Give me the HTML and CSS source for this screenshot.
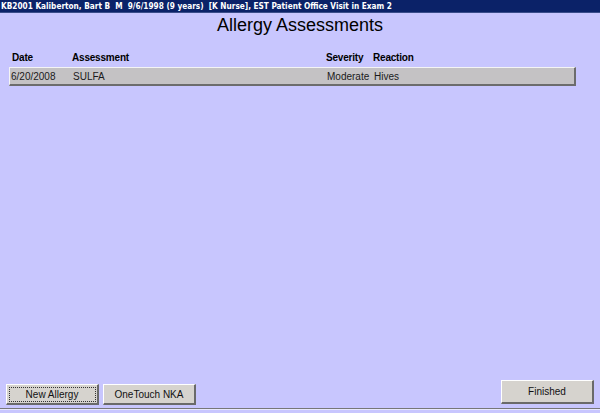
FILE: index.html
```html
<!DOCTYPE html>
<html>
<head>
<meta charset="utf-8">
<link rel="stylesheet" href="styles.css">
</head>
<body>
<div class="titlebar">KB2001 Kaliberton, Bart B&nbsp; M&nbsp; 9/6/1998 (9 years)&nbsp; [K Nurse], EST Patient Office Visit in Exam 2</div>
<main class="content">
  <h1 class="heading">Allergy Assessments</h1>
  <div class="grid">
    <div class="row head">
      <span class="c-date">Date</span>
      <span class="c-assess">Assessment</span>
      <span class="c-sev">Severity</span>
      <span class="c-react">Reaction</span>
    </div>
    <div class="row item">
      <span class="c-date">6/20/2008</span>
      <span class="c-assess">SULFA</span>
      <span class="c-sev">Moderate</span>
      <span class="c-react">Hives</span>
    </div>
  </div>
  <div class="spacer"></div>
  <div class="footer">
    <div class="left">
      <button class="btn focus">New Allergy</button>
      <button class="btn">OneTouch NKA</button>
    </div>
    <button class="btn tall">Finished</button>
  </div>
</main>
<div class="bottomline"></div>
</body>
</html>
```
FILE: styles.css
```css
html, body { margin: 0; padding: 0; }
body {
  width: 600px; height: 413px;
  background: #c8c6fe;
  font-family: "Liberation Sans", Arial, sans-serif;
  display: flex; flex-direction: column;
  overflow: hidden;
}
.titlebar {
  height: 12px;
  background: #0b2268;
  color: #fff;
  font-family: "DejaVu Sans Condensed", "DejaVu Sans", sans-serif;
  font-weight: bold;
  font-size: 8.2px;
  line-height: 12px;
  padding-left: 1px;
  white-space: nowrap;
  border-bottom: 1px solid #3a4d8a;
}
.content {
  flex: 1;
  display: flex; flex-direction: column;
}
.heading {
  margin: 1px 0 0;
  text-align: center;
  font-weight: normal;
  font-size: 18px;
  line-height: 22px;
  color: #000;
}
.grid { margin: 15px 0 0 9px; width: 567px; }
.row { display: flex; font-size: 10px; align-items: center; }
.row.head { font-weight: bold; height: 16px; color: #000; letter-spacing: -0.2px; align-items: flex-start; line-height: 13px; }
.row.item {
  height: 16px;
  background: #c4c2c4;
  border-top: 1px solid #f4f4f4;
  border-left: 1px solid #f4f4f4;
  border-right: 2px solid #6c6c6c;
  border-bottom: 2px solid #6c6c6c;
  color: #1a1a1a;
}
.row.head .c-date { padding-left: 3px; }
.row.item .c-date { padding-left: 1px; }
.c-date { width: 60px; }
.row.item .c-date { width: 62px; }
.c-assess { width: 254px; }
.c-sev { width: 47px; }
.c-react { flex: 1; }
.spacer { flex: 1; }
.footer {
  display: flex; justify-content: space-between; align-items: flex-end;
  padding: 0 6px 3px 6px;
}
.left { display: flex; gap: 4px; }
.btn {
  font-family: "Liberation Sans", Arial, sans-serif;
  font-size: 10px;
  color: #111;
  background: #d6d3ce;
  width: 93px; height: 21px;
  border: none;
  border-top: 1px solid #fff;
  border-left: 1px solid #fff;
  border-right: 2px solid #6a6a6a;
  border-bottom: 2px solid #6a6a6a;
  padding: 0;
  margin: 0;
}
.btn.focus { outline: 1px dotted #333; outline-offset: -4px; }
.btn.tall { height: 24px; margin-bottom: 1px; }
.bottomline {
  height: 1px;
  background: #777;
  border-bottom: 1px solid #e8e8ff;
  margin-bottom: 3px;
}
```
